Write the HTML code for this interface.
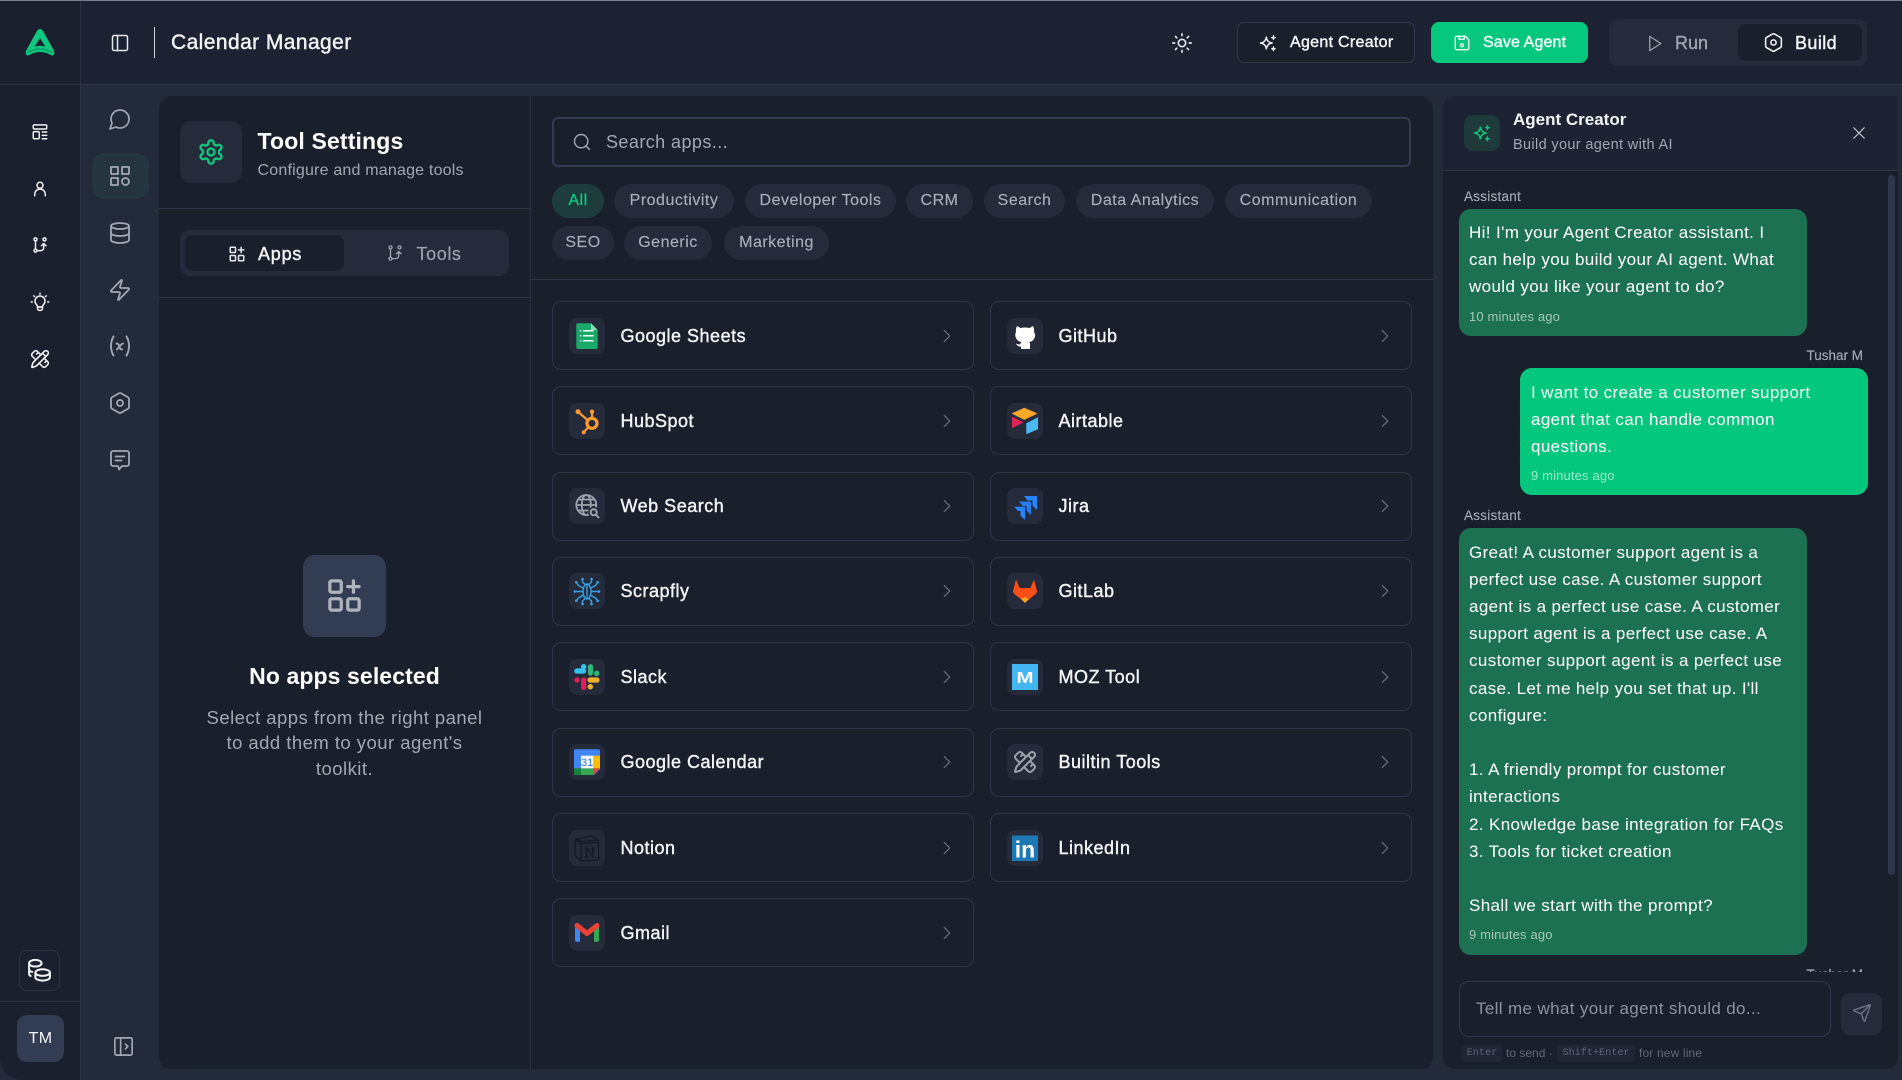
<!DOCTYPE html>
<html><head><meta charset="utf-8"><title>Calendar Manager</title>
<style>
*{box-sizing:border-box}
html,body{margin:0;padding:0;width:1902px;height:1080px;overflow:hidden;background:#232a3a;font-family:"Liberation Sans",sans-serif}
.abs,.t,.box,svg.i{position:absolute}
.t{white-space:nowrap;line-height:20px;height:20px}
.m{-webkit-text-stroke:.42px currentColor}
svg.i{fill:none;stroke:currentColor;stroke-linecap:round;stroke-linejoin:round;stroke-width:2}
.card{position:absolute;width:422px;height:69px;border:1.5px solid #2d3548;border-radius:9px;background:#1a1f2c}
.ib{position:absolute;left:15.5px;top:15.5px;width:36px;height:36px;border-radius:8px;background:#252b3a}
.ib svg{position:absolute;left:0;top:0;width:36px;height:36px}
.cn{position:absolute;left:67.5px;top:23.5px;line-height:20px;font-size:18px;letter-spacing:.5px;color:#f3f4f6;white-space:nowrap;-webkit-text-stroke:.4px #f3f4f6}
.chev{position:absolute;left:382.5px;top:22.5px;width:22px;height:22px;fill:none;stroke:#6b7280;stroke-width:1.3;stroke-linecap:round;stroke-linejoin:round}
.chip{position:absolute;height:34px;border-radius:17px;background:#252b3a;color:#a9afba;font-size:16px;letter-spacing:.5px;line-height:34px;text-align:center;white-space:nowrap;-webkit-text-stroke:.15px #a9afba}
.b{position:absolute;border-radius:12px;color:#fff;font-size:17px;letter-spacing:.37px;line-height:27.2px;white-space:nowrap}
.ts{font-size:13px;letter-spacing:.15px;line-height:20px}
.lbl{position:absolute;font-size:13.5px;letter-spacing:.25px;color:#a4aab5;line-height:20px;white-space:nowrap;-webkit-text-stroke:.15px #a4aab5}
kbd{position:absolute;height:17px;line-height:17px;background:#202635;border-radius:3px;color:#5f6776;font:10.2px/17px "Liberation Mono",monospace;text-align:center}
</style></head><body>

<div class="abs" style="left:0;top:0;width:1902px;height:1080px;background:#232a3a;border-radius:0 0 22px 22px;overflow:hidden">

<!-- header -->
<div class="abs" style="left:0;top:0;width:1902px;height:84px;background:#1c2231"></div>
<div class="abs" style="left:0;top:84px;width:1902px;height:1px;background:#2d3548"></div>
<!-- rail -->
<div class="abs" style="left:0;top:0;width:80px;height:1080px;background:#1a202d"></div>
<div class="abs" style="left:80px;top:0;width:1px;height:1080px;background:#2a3244"></div>
<div class="abs" style="left:0;top:84px;width:80px;height:1px;background:#2d3548"></div>

<!-- logo -->
<svg class="abs" style="left:0;top:0" width="80" height="84"><path d="M40 29Q42 29 43.2 31.2L53.8 50.5Q55.6 54.6 52 55.6Q40 48.5 28 55.6Q24.4 54.6 26.2 50.5L36.8 31.2Q38 29 40 29z" fill="#0cc97f"/><path d="M40 38L45.5 47Q40 44.6 34.5 47z" fill="#1a202d"/><path d="M27 53Q40 45 53 53" fill="none" stroke="#0a9d66" stroke-width="1.6"/></svg>

<!-- header left -->
<svg class="i" style="left:110px;top:33px;color:#e5e7eb;stroke-width:1.8" width="20" height="20" viewBox="0 0 24 24"><rect x="3" y="3" width="18" height="18" rx="2"/><path d="M9 3v18"/></svg>
<div class="abs" style="left:154px;top:27px;width:1px;height:31px;background:#d1d5db"></div>
<div class="t m" style="left:171px;top:33px;font-size:21px;letter-spacing:.42px;color:#f3f4f6">Calendar Manager</div>

<!-- header right -->
<svg class="i" style="left:1171px;top:32px;color:#e5e7eb;stroke-width:1.8" width="22" height="22" viewBox="0 0 24 24"><circle cx="12" cy="12" r="4"/><path d="M12 2v2M12 20v2M4.9 4.9l1.4 1.4M17.7 17.7l1.4 1.4M2 12h2M20 12h2M4.9 19.1l1.4-1.4M17.7 6.3l1.4-1.4"/></svg>

<div class="abs" style="left:1237px;top:22px;width:178px;height:41px;border:1.5px solid #2f374b;border-radius:7px;background:#1a1f2c"></div>
<svg class="i" style="left:1258px;top:33px;color:#f3f4f6;stroke-width:1.8" width="20" height="20" viewBox="0 0 24 24"><path d="M10 5Q10.8 11.2 17 12Q10.8 12.8 10 19Q9.2 12.8 3 12Q9.2 11.2 10 5z"/><path d="M18.5 2.5l.9 2.1 2.1.9-2.1.9-.9 2.1-.9-2.1-2.1-.9 2.1-.9z" fill="currentColor" stroke-width=".6"/><path d="M18.5 16l.9 2.1 2.1.9-2.1.9-.9 2.1-.9-2.1-2.1-.9 2.1-.9z" fill="currentColor" stroke-width=".6"/></svg>
<div class="t m" style="left:1290px;top:33px;font-size:16px;letter-spacing:.3px;color:#f3f4f6">Agent Creator</div>

<div class="abs" style="left:1431px;top:22px;width:157px;height:41px;border-radius:8px;background:#05c77d"></div>
<svg class="i" style="left:1453px;top:34px;color:#f5fffb;stroke-width:1.8" width="18" height="18" viewBox="0 0 24 24"><path d="M5 3h11.5L21 7.5V19a2 2 0 0 1-2 2H5a2 2 0 0 1-2-2V5a2 2 0 0 1 2-2z"/><path d="M8 3v4h7V3"/><circle cx="12" cy="15" r="2"/></svg>
<div class="t m" style="left:1483px;top:33px;font-size:16px;letter-spacing:.13px;color:#f5fffb">Save Agent</div>

<div class="abs" style="left:1609px;top:19px;width:258px;height:47px;border-radius:9px;background:#252b3a"></div>
<div class="abs" style="left:1738px;top:24px;width:124px;height:37px;border-radius:8px;background:#1a1f2c"></div>
<svg class="i" style="left:1645px;top:33.5px;color:#9ca3af;stroke-width:1.6" width="19" height="19" viewBox="0 0 24 24"><path d="M6 3l14 9-14 9z"/></svg>
<div class="t m" style="left:1675px;top:33px;font-size:18px;color:#9ca3af">Run</div>
<svg class="i" style="left:1763px;top:32px;color:#f3f4f6;stroke-width:1.8" width="21" height="21" viewBox="0 0 24 24"><path d="M21 16V8a2 2 0 0 0-1-1.73l-7-4a2 2 0 0 0-2 0l-7 4A2 2 0 0 0 3 8v8a2 2 0 0 0 1 1.73l7 4a2 2 0 0 0 2 0l7-4A2 2 0 0 0 21 16z"/><circle cx="12" cy="12" r="3"/></svg>
<div class="t m" style="left:1795px;top:33px;font-size:18px;letter-spacing:.4px;color:#f3f4f6">Build</div>

<!-- rail icons -->
<svg class="i" style="left:31px;top:123px;color:#f3f4f6;stroke-width:1.9" width="18" height="18" viewBox="0 0 24 24"><rect x="3" y="2.5" width="18" height="5.5" rx="1.5"/><rect x="3" y="11.5" width="8" height="9.5" rx="1.5"/><path d="M15 12h6M15 16.5h6M15 21h6"/></svg>
<svg class="i" style="left:31px;top:180px;color:#f3f4f6;stroke-width:1.9" width="18" height="18" viewBox="0 0 24 24"><circle cx="12" cy="7" r="4"/><path d="M5 21v-2a7 7 0 0 1 14 0v2"/></svg>
<svg class="i" style="left:31px;top:236px;color:#f3f4f6;stroke-width:1.9" width="18" height="18" viewBox="0 0 24 24"><circle cx="6" cy="4.5" r="2"/><circle cx="6" cy="19.5" r="2"/><circle cx="18" cy="4.5" r="2"/><path d="M6 6.5v11M8 19.5h5a4 4 0 0 0 4-4V10M14 13l3-3 3 3"/></svg>
<svg class="i" style="left:30px;top:292px;color:#f3f4f6;stroke-width:1.8" width="20" height="20" viewBox="0 0 24 24"><path d="M8.2 15.5a6 6 0 1 1 7.6 0c-.6.6-.8 1.3-.8 2.5H9c0-1.2-.2-1.9-.8-2.5z"/><path d="M9 18h6v1.5a2.5 2.5 0 0 1-2.5 2.5h-1A2.5 2.5 0 0 1 9 19.5z"/><path d="M12 1.5v1M4.5 4.5l.8.8M19.5 4.5l-.8.8M1.5 12h1.2M21.3 12h1.2"/></svg>
<svg class="i" style="left:30px;top:349px;color:#f3f4f6;stroke-width:1.9" width="20" height="20" viewBox="0 0 24 24"><path d="M13 7 8.7 2.7a2.41 2.41 0 0 0-3.4 0L2.7 5.3a2.41 2.41 0 0 0 0 3.4L7 13"/><path d="m8 6 2-2"/><path d="m18 16 2-2"/><path d="m17 11 4.3 4.3c.94.94.94 2.46 0 3.4l-2.6 2.6c-.94.94-2.46.94-3.4 0L11 17"/><path d="M21.174 6.812a1 1 0 0 0-3.986-3.987L3.842 16.174a2 2 0 0 0-.5.83l-1.321 4.352a.5.5 0 0 0 .623.622l4.353-1.32a2 2 0 0 0 .83-.497z"/><path d="m15 5 4 4"/></svg>

<!-- coin button -->
<div class="abs" style="left:19px;top:950px;width:41px;height:41px;border:1.2px solid #2a3244;border-radius:8px"></div>
<svg class="i" style="left:27px;top:958px;color:#f3f4f6;stroke-width:1.9" width="25" height="25" viewBox="0 0 24 24"><ellipse cx="8" cy="5" rx="6" ry="3.2"/><path d="M2 5v5.5c0 1.3 1.2 2.4 3 2.9M2 10.5V15c0 1 .5 1.7 1.5 2.3"/><ellipse cx="15" cy="14" rx="7" ry="3.2"/><path d="M8 14v4.5c0 1.8 3.1 3.2 7 3.2s7-1.4 7-3.2V14"/></svg>
<div class="abs" style="left:0;top:1001px;width:80px;height:1px;background:#2a3244"></div>
<div class="abs" style="left:17px;top:1015px;width:47px;height:47px;border-radius:10px;background:#323c52;color:#f3f4f6;font-size:16px;line-height:47px;text-align:center;letter-spacing:.3px">TM</div>

<!-- sidebar icons -->
<div class="abs" style="left:92px;top:153px;width:57px;height:46px;border-radius:12px;background:#243540"></div>
<svg class="i" style="left:108px;top:107px;color:#a1a8b3;stroke-width:1.7" width="24" height="24" viewBox="0 0 24 24"><path d="M7.9 20A9 9 0 1 0 4 16.1L2 22Z"/></svg>
<svg class="i" style="left:108px;top:163.5px;color:#a1a8b3;stroke-width:1.8" width="24" height="24" viewBox="0 0 24 24"><rect x="3" y="3" width="7" height="7"/><rect x="14" y="3" width="7" height="7"/><rect x="3" y="14" width="7" height="7"/><circle cx="17.5" cy="17.5" r="3.5"/></svg>
<svg class="i" style="left:108px;top:221px;color:#a1a8b3;stroke-width:1.8" width="24" height="24" viewBox="0 0 24 24"><ellipse cx="12" cy="5" rx="9" ry="3"/><path d="M3 5V19A9 3 0 0 0 21 19V5"/><path d="M3 12A9 3 0 0 0 21 12"/></svg>
<svg class="i" style="left:108px;top:278px;color:#a1a8b3;stroke-width:1.8" width="24" height="24" viewBox="0 0 24 24"><path d="M4 14a1 1 0 0 1-.78-1.63l9.9-10.2a.5.5 0 0 1 .86.46l-1.92 6.02A1 1 0 0 0 13 10h7a1 1 0 0 1 .78 1.63l-9.9 10.2a.5.5 0 0 1-.86-.46l1.92-6.02A1 1 0 0 0 11 14z"/></svg>
<svg class="i" style="left:108px;top:334px;color:#a1a8b3;stroke-width:1.9" width="24" height="24" viewBox="0 0 24 24"><path d="M5.5 2.5C2.2 8 2.2 16 5.5 21.5"/><path d="M18.5 2.5C21.8 8 21.8 16 18.5 21.5"/><path d="M8.5 9.5c1.6 0 2.2.8 2.8 2.7s1.1 3.3 2.8 3.3"/><path d="M15 9.5c-2 .4-3.6 3-6 6"/></svg>
<svg class="i" style="left:108px;top:391px;color:#a1a8b3;stroke-width:1.8" width="24" height="24" viewBox="0 0 24 24"><path d="M21 16V8a2 2 0 0 0-1-1.73l-7-4a2 2 0 0 0-2 0l-7 4A2 2 0 0 0 3 8v8a2 2 0 0 0 1 1.73l7 4a2 2 0 0 0 2 0l7-4A2 2 0 0 0 21 16z"/><circle cx="12" cy="12" r="3"/></svg>
<svg class="i" style="left:108px;top:448px;color:#a1a8b3;stroke-width:1.8" width="24" height="24" viewBox="0 0 24 24"><path d="M5 3h14a2 2 0 0 1 2 2v11a2 2 0 0 1-2 2h-5l-3 3.5-1-3.5H5a2 2 0 0 1-2-2V5a2 2 0 0 1 2-2z"/><path d="M7.5 8.5h9M7.5 12.5h6"/></svg>
<svg class="i" style="left:111.5px;top:1034.5px;color:#a1a8b3;stroke-width:1.7" width="23" height="23" viewBox="0 0 24 24"><rect x="3" y="3" width="18" height="18" rx="1.5"/><path d="M9 3v18M14 9.5l2.5 2.5-2.5 2.5"/></svg>

<!-- left panel -->
<div class="abs" style="left:159px;top:96px;width:371px;height:973px;background:#1a1f2c;border-radius:12px 0 0 12px"></div>
<div class="abs" style="left:530px;top:96px;width:1px;height:973px;background:#2a3244"></div>
<div class="abs" style="left:180px;top:121px;width:62px;height:62px;border-radius:11px;background:#252b3a"></div>
<svg class="i" style="left:197px;top:138px;color:#0cc97f;stroke-width:2" width="28" height="28" viewBox="0 0 24 24"><path d="M12.22 2h-.44a2 2 0 0 0-2 2v.18a2 2 0 0 1-1 1.73l-.43.25a2 2 0 0 1-2 0l-.15-.08a2 2 0 0 0-2.73.73l-.22.38a2 2 0 0 0 .73 2.73l.15.1a2 2 0 0 1 1 1.72v.51a2 2 0 0 1-1 1.74l-.15.09a2 2 0 0 0-.73 2.73l.22.38a2 2 0 0 0 2.73.73l.15-.08a2 2 0 0 1 2 0l.43.25a2 2 0 0 1 1 1.73V20a2 2 0 0 0 2 2h.44a2 2 0 0 0 2-2v-.18a2 2 0 0 1 1-1.73l.43-.25a2 2 0 0 1 2 0l.15.08a2 2 0 0 0 2.73-.73l.22-.39a2 2 0 0 0-.73-2.73l-.15-.08a2 2 0 0 1-1-1.74v-.5a2 2 0 0 1 1-1.74l.15-.09a2 2 0 0 0 .73-2.73l-.22-.38a2 2 0 0 0-2.73-.73l-.15.08a2 2 0 0 1-2 0l-.43-.25a2 2 0 0 1-1-1.73V4a2 2 0 0 0-2-2z"/><circle cx="12" cy="12" r="3"/></svg>
<div class="t" style="left:257.5px;top:131px;font-size:23px;font-weight:700;letter-spacing:.15px;color:#fff">Tool Settings</div>
<div class="t" style="left:257.5px;top:161px;font-size:16px;letter-spacing:.2px;color:#a1a8b3">Configure and manage tools</div>
<div class="abs" style="left:159px;top:208px;width:371px;height:1px;background:#2d3548"></div>
<div class="abs" style="left:180px;top:230px;width:329px;height:46px;border-radius:10px;background:#252b3a"></div>
<div class="abs" style="left:185px;top:235px;width:159px;height:36px;border-radius:8px;background:#1a1f2c"></div>
<svg class="i" style="left:228px;top:245px;color:#e5e7eb;stroke-width:2" width="18" height="18" viewBox="0 0 24 24"><rect x="3" y="3" width="7" height="7" rx="1"/><rect x="3" y="14" width="7" height="7" rx="1"/><rect x="14" y="14" width="7" height="7" rx="1"/><path d="M17.5 3v7M14 6.5h7"/></svg>
<div class="t m" style="left:258px;top:243.5px;font-size:18px;letter-spacing:.8px;color:#f3f4f6">Apps</div>
<svg class="i" style="left:386px;top:244px;color:#9ca3af;stroke-width:1.8" width="18" height="18" viewBox="0 0 24 24"><circle cx="6" cy="4.5" r="2"/><circle cx="6" cy="19.5" r="2"/><circle cx="18" cy="4.5" r="2"/><path d="M6 6.5v11M8 19.5h5a4 4 0 0 0 4-4V10M14 13l3-3 3 3"/></svg>
<div class="t" style="left:416.5px;top:243.5px;font-size:18px;letter-spacing:.6px;color:#9ca3af;-webkit-text-stroke:.2px #9ca3af">Tools</div>
<div class="abs" style="left:159px;top:297px;width:371px;height:1px;background:#2d3548"></div>

<div class="abs" style="left:303px;top:555px;width:83px;height:82px;border-radius:12px;background:#323c52"></div>
<svg class="i" style="left:325px;top:576px;color:#aeb3bc;stroke-width:2" width="39" height="39" viewBox="0 0 24 24"><rect x="3" y="3" width="7" height="7" rx="1"/><rect x="3" y="14" width="7" height="7" rx="1"/><rect x="14" y="14" width="7" height="7" rx="1"/><path d="M17.5 3v7M14 6.5h7"/></svg>
<div class="t" style="left:159px;width:371px;top:666px;text-align:center;font-size:23px;font-weight:700;letter-spacing:.1px;color:#fff">No apps selected</div>
<div class="abs" style="left:159px;width:371px;top:704.5px;text-align:center;font-size:18.5px;letter-spacing:.46px;line-height:25.8px;color:#a1a8b3;white-space:nowrap">Select apps from the right panel<br>to add them to your agent's<br>toolkit.</div>

<!-- center panel -->
<div class="abs" style="left:531px;top:96px;width:902px;height:973px;background:#1a1f2c;border-radius:0 12px 12px 0"></div>
<div class="abs" style="left:552px;top:117px;width:859px;height:50px;border:2px solid #323c52;border-radius:6px"></div>
<svg class="i" style="left:572px;top:132px;color:#a1a8b3;stroke-width:1.7" width="20" height="20" viewBox="0 0 24 24"><circle cx="11" cy="11" r="8"/><path d="m21 21-4.3-4.3"/></svg>
<div class="t" style="left:606px;top:132px;font-size:18px;letter-spacing:.43px;color:#a1a8b3">Search apps...</div>

<div class="chip" style="left:552px;top:184px;width:52px;background:#1d3d3d;color:#0cc97f;-webkit-text-stroke:.3px #0cc97f">All</div>
<div class="chip" style="left:614px;top:184px;width:120px">Productivity</div>
<div class="chip" style="left:745px;top:184px;width:151px">Developer Tools</div>
<div class="chip" style="left:906px;top:184px;width:67px">CRM</div>
<div class="chip" style="left:984px;top:184px;width:81px">Search</div>
<div class="chip" style="left:1076px;top:184px;width:138px">Data Analytics</div>
<div class="chip" style="left:1225px;top:184px;width:147px">Communication</div>
<div class="chip" style="left:552px;top:226px;width:62px">SEO</div>
<div class="chip" style="left:624px;top:226px;width:88px">Generic</div>
<div class="chip" style="left:724px;top:226px;width:105px">Marketing</div>
<div class="abs" style="left:531px;top:279px;width:902px;height:1px;background:#2d3548"></div>

<!-- cards column 1 -->
<div class="card" style="left:552px;top:301px"><div class="ib"><svg viewBox="0 0 36 36"><path d="M8.8 5.3H22L28.7 12V29.5a1.5 1.5 0 0 1-1.5 1.5H8.8a1.5 1.5 0 0 1-1.5-1.5V6.8a1.5 1.5 0 0 1 1.5-1.5z" fill="#19a968"/><path d="M22 5.3 28.7 12H22z" fill="#8adbb4"/><path d="M11 12.7h1.2M14 12.7h10.5M11 17.7h1.2M14 17.7h10.5M11 22.7h1.2M14 22.7h10.5" stroke="#fff" stroke-width="1.5"/></svg></div><div class="cn">Google Sheets</div><svg class="chev" viewBox="0 0 24 24"><path d="m9 18 6-6-6-6"/></svg></div>

<div class="card" style="left:552px;top:386px"><div class="ib"><svg viewBox="0 0 36 36"><g stroke="#ff9a2e" fill="none"><circle cx="23" cy="20.3" r="5" stroke-width="3.2"/><path d="M9 8.7 19 17.5M23 8.7V15M14.7 29.3 19.5 24" stroke-width="2.2"/></g><circle cx="9" cy="8.7" r="2.5" fill="#ff9a2e"/><circle cx="23" cy="8.7" r="2.2" fill="#ff9a2e"/><circle cx="14.7" cy="29.3" r="2.1" fill="#ff9a2e"/></svg></div><div class="cn">HubSpot</div><svg class="chev" viewBox="0 0 24 24"><path d="m9 18 6-6-6-6"/></svg></div>

<div class="card" style="left:552px;top:471.5px"><div class="ib"><svg viewBox="0 0 36 36"><g stroke="#9ca3ab" fill="none" stroke-width="1.8"><circle cx="17.3" cy="17" r="10"/><ellipse cx="17.3" cy="17" rx="4.5" ry="10"/><path d="M7.3 17h20M9 11.5h16.6M9 22.5h16.6"/></g><circle cx="24.7" cy="24.3" r="5.5" fill="#252b3a"/><circle cx="24.7" cy="24.3" r="3" fill="none" stroke="#9ca3ab" stroke-width="2"/><path d="M27 26.7 30 30" stroke="#9ca3ab" stroke-width="2"/></svg></div><div class="cn">Web Search</div><svg class="chev" viewBox="0 0 24 24"><path d="m9 18 6-6-6-6"/></svg></div>

<div class="card" style="left:552px;top:556.5px"><div class="ib"><svg viewBox="0 0 36 36"><g stroke="#38a4e8" fill="none" stroke-width="1.4"><ellipse cx="18" cy="18.5" rx="4" ry="7.5"/><path d="M16 11.5 13.5 9V6.5M20 11.5 22.5 9V6.5M14 15 9.5 12.5 7.5 9.5M22 15 26.5 12.5 28.5 9.5M14 18.5H6.5M22 18.5H29.5M14.5 22 9.5 25 7.5 27.5M21.5 22 26.5 25 28.5 27.5M16 25.5 13.5 28V31M20 25.5 22.5 28V31M18 11V26"/></g><g fill="#38a4e8"><circle cx="13.5" cy="6" r="1.3"/><circle cx="22.5" cy="6" r="1.3"/><circle cx="7.3" cy="9.3" r="1.3"/><circle cx="28.7" cy="9.3" r="1.3"/><circle cx="6" cy="18.5" r="1.3"/><circle cx="30" cy="18.5" r="1.3"/><circle cx="7.3" cy="27.7" r="1.3"/><circle cx="28.7" cy="27.7" r="1.3"/><circle cx="13.5" cy="31" r="1.3"/><circle cx="22.5" cy="31" r="1.3"/></g></svg></div><div class="cn">Scrapfly</div><svg class="chev" viewBox="0 0 24 24"><path d="m9 18 6-6-6-6"/></svg></div>

<div class="card" style="left:552px;top:642px"><div class="ib"><svg viewBox="0 0 36 36"><g fill="none" stroke-width="5.2" stroke-linecap="round"><path d="M21.5 7.7V14" stroke="#2eb67d"/><path d="M7.8 12H14.5" stroke="#36c5f0"/><path d="M14.7 21V28.5" stroke="#e01e5a"/><path d="M21 21H28" stroke="#ecb22e"/></g><circle cx="27.7" cy="14.3" r="2.7" fill="#2eb67d"/><circle cx="14.7" cy="7.7" r="2.7" fill="#36c5f0"/><circle cx="8" cy="21" r="2.7" fill="#e01e5a"/><circle cx="21.3" cy="27.7" r="2.7" fill="#ecb22e"/></svg></div><div class="cn">Slack</div><svg class="chev" viewBox="0 0 24 24"><path d="m9 18 6-6-6-6"/></svg></div>

<div class="card" style="left:552px;top:727.5px"><div class="ib"><svg viewBox="0 0 36 36"><path d="M6.5 5.3H29.5a1.5 1.5 0 0 1 1.5 1.5V25L25 31H6.5A1.5 1.5 0 0 1 5 29.5V6.8a1.5 1.5 0 0 1 1.5-1.5z" fill="#3f85f4"/><rect x="24.3" y="11.7" width="6.7" height="13.3" fill="#fbbc04"/><rect x="12" y="24.3" width="13" height="6.7" fill="#34a853"/><rect x="5" y="24.3" width="7" height="6.7" fill="#188038"/><path d="M24.3 31 31 24.3H24.3z" fill="#ea4335"/><rect x="12" y="11.7" width="12.3" height="12.6" fill="#fff"/><text x="18.1" y="22" text-anchor="middle" font-family="Liberation Sans" font-size="11" fill="#1a73e8">31</text></svg></div><div class="cn">Google Calendar</div><svg class="chev" viewBox="0 0 24 24"><path d="m9 18 6-6-6-6"/></svg></div>

<div class="card" style="left:552px;top:813px"><div class="ib"><svg viewBox="0 0 36 36"><g fill="none" stroke="#12161f" stroke-width="1.1"><path d="M6 9.5 22.5 6 29.5 11V30L12 31 6 25z"/><path d="M6 9.5 12 13.5 29.5 12.5M12 13.5V31M8 9 12 11.5 27 10.5"/></g><text x="20.5" y="27" text-anchor="middle" font-family="Liberation Serif" font-size="14" fill="none" stroke="#12161f" stroke-width=".7">N</text></svg></div><div class="cn">Notion</div><svg class="chev" viewBox="0 0 24 24"><path d="m9 18 6-6-6-6"/></svg></div>

<div class="card" style="left:552px;top:898px"><div class="ib"><svg viewBox="0 0 36 36"><path d="M6 12.5 11 10V26.7H7.5A1.5 1.5 0 0 1 6 25.2z" fill="#4285f4"/><path d="M30 12.5 25 10V26.7H28.5A1.5 1.5 0 0 0 30 25.2z" fill="#34a853"/><path d="M8 10.5 18 18.5 28 10.5" fill="none" stroke="#ea4335" stroke-width="5" stroke-linecap="round" stroke-linejoin="round"/></svg></div><div class="cn">Gmail</div><svg class="chev" viewBox="0 0 24 24"><path d="m9 18 6-6-6-6"/></svg></div>

<!-- cards column 2 -->
<div class="card" style="left:990px;top:301px"><div class="ib"><svg viewBox="0 0 36 36"><path d="M10 8l3.5 2Q18 9 22.5 10L26 8Q27.5 11 27 14Q29 17 27.5 20Q26 23.5 22 24Q23.5 25.5 23 27V31H14V28.5Q10.5 29 9 25.5Q11 26.5 13 26.5Q13.5 25 14.5 24Q10.5 23.5 9 20Q7.5 17 9 14Q8.5 11 10 8z" fill="#fff"/></svg></div><div class="cn">GitHub</div><svg class="chev" viewBox="0 0 24 24"><path d="m9 18 6-6-6-6"/></svg></div>

<div class="card" style="left:990px;top:386px"><div class="ib"><svg viewBox="0 0 36 36"><path d="M17.3 5.3 29.3 10.5 17.3 16.3 5.7 10.5z" fill="#fba729" stroke="#fba729" stroke-linejoin="round"/><path d="M5 13.7 16.7 19.3 5 25.3z" fill="#e02454"/><path d="M19.3 20.3 31 14.3V26.3L19.3 31.3z" fill="#4ab9f3"/></svg></div><div class="cn">Airtable</div><svg class="chev" viewBox="0 0 24 24"><path d="m9 18 6-6-6-6"/></svg></div>

<div class="card" style="left:990px;top:471.5px"><div class="ib"><svg viewBox="0 0 36 36"><g fill="#2684ff"><path d="M17 8H30V22L25.5 17.5V12.5H20.5z"/><path d="M12 13.5H24V27L19.5 22.5V18H15.5z" opacity=".92"/><path d="M7 18.7H18V32L13.5 27.5V23H11z"/></g></svg></div><div class="cn">Jira</div><svg class="chev" viewBox="0 0 24 24"><path d="m9 18 6-6-6-6"/></svg></div>

<div class="card" style="left:990px;top:556.5px"><div class="ib"><svg viewBox="0 0 36 36"><path d="M9 6.5 12.7 15H23.3L27 6.5 30 18Q30 20 28 21.5L18 29.5 8 21.5Q6 20 6 18z" fill="#fc4f17"/><path d="M18 24 22 26 18 30 14 26z" fill="#fca326"/></svg></div><div class="cn">GitLab</div><svg class="chev" viewBox="0 0 24 24"><path d="m9 18 6-6-6-6"/></svg></div>

<div class="card" style="left:990px;top:642px"><div class="ib"><svg viewBox="0 0 36 36"><rect x="5" y="5" width="26" height="26" fill="#43b5f0"/><text x="18" y="24" text-anchor="middle" font-family="Liberation Sans" font-size="16" font-weight="700" fill="#fff" textLength="17" lengthAdjust="spacingAndGlyphs">M</text></svg></div><div class="cn">MOZ Tool</div><svg class="chev" viewBox="0 0 24 24"><path d="m9 18 6-6-6-6"/></svg></div>

<div class="card" style="left:990px;top:727.5px"><div class="ib"><svg viewBox="-6 -6 36 36" fill="none" stroke="#9ca3ab" stroke-width="2" stroke-linecap="round" stroke-linejoin="round"><path d="M13 7 8.7 2.7a2.41 2.41 0 0 0-3.4 0L2.7 5.3a2.41 2.41 0 0 0 0 3.4L7 13"/><path d="m8 6 2-2"/><path d="m18 16 2-2"/><path d="m17 11 4.3 4.3c.94.94.94 2.46 0 3.4l-2.6 2.6c-.94.94-2.46.94-3.4 0L11 17"/><path d="M21.174 6.812a1 1 0 0 0-3.986-3.987L3.842 16.174a2 2 0 0 0-.5.83l-1.321 4.352a.5.5 0 0 0 .623.622l4.353-1.32a2 2 0 0 0 .83-.497z"/><path d="m15 5 4 4"/></svg></div><div class="cn">Builtin Tools</div><svg class="chev" viewBox="0 0 24 24"><path d="m9 18 6-6-6-6"/></svg></div>

<div class="card" style="left:990px;top:813px"><div class="ib"><svg viewBox="0 0 36 36"><rect x="5" y="5.5" width="26" height="25.5" fill="#1f78b4"/><text x="18" y="27.5" text-anchor="middle" font-family="Liberation Sans" font-size="23" font-weight="700" fill="#fff">in</text></svg></div><div class="cn">LinkedIn</div><svg class="chev" viewBox="0 0 24 24"><path d="m9 18 6-6-6-6"/></svg></div>

<!-- right panel -->
<div class="abs" style="left:1443px;top:96px;width:455px;height:973px;background:#1a1f2c;border-radius:12px 0 12px 12px"></div>
<div class="abs" style="left:1443px;top:96px;width:455px;height:75px;background:#1d2332;border-radius:12px 0 0 0"></div>
<div class="abs" style="left:1443px;top:170px;width:455px;height:1px;background:#2d3548"></div>
<div class="abs" style="left:1464px;top:115px;width:36px;height:36px;border-radius:9px;background:#1e3a3a"></div>
<svg class="i" style="left:1472px;top:123px;color:#0cc97f;stroke-width:1.8" width="20" height="20" viewBox="0 0 24 24"><path d="M10 5Q10.8 11.2 17 12Q10.8 12.8 10 19Q9.2 12.8 3 12Q9.2 11.2 10 5z"/><path d="M18.5 2.5l.9 2.1 2.1.9-2.1.9-.9 2.1-.9-2.1-2.1-.9 2.1-.9z" fill="currentColor" stroke-width=".6"/><path d="M18.5 16l.9 2.1 2.1.9-2.1.9-.9 2.1-.9-2.1-2.1-.9 2.1-.9z" fill="currentColor" stroke-width=".6"/></svg>
<div class="t" style="left:1513px;top:110px;font-size:17px;font-weight:700;color:#f3f4f6">Agent Creator</div>
<div class="t" style="left:1513px;top:134.5px;font-size:14.5px;letter-spacing:.35px;color:#a1a8b3">Build your agent with AI</div>
<svg class="i" style="left:1850px;top:124px;color:#c4c8cf;stroke-width:1.6" width="18" height="18" viewBox="0 0 24 24"><path d="M19 5 5 19M5 5l14 14"/></svg>

<!-- scrollbar -->
<div class="abs" style="left:1888px;top:175px;width:7px;height:700px;border-radius:4px;background:#2e374d"></div>

<!-- messages -->
<div class="abs" style="left:1443px;top:172px;width:440px;height:800px;overflow:hidden">
  <div class="lbl" style="left:21px;top:15px">Assistant</div>
  <div class="b" style="left:16px;top:37px;width:348px;height:127px;background:#1c7152;padding:10px 10px">Hi! I'm your Agent Creator assistant. I<br>can help you build your AI agent. What<br>would you like your agent to do?<div class="ts" style="margin-top:6px;color:rgba(255,255,255,.6)">10 minutes ago</div></div>
  <div class="lbl" style="right:20px;top:174px;letter-spacing:0">Tushar M</div>
  <div class="b" style="left:77px;top:196px;width:348px;height:127px;background:#03c77c;padding:11px 11px">I want to create a customer support<br>agent that can handle common<br>questions.<div class="ts" style="margin-top:5px;color:rgba(255,255,255,.6)">9 minutes ago</div></div>
  <div class="lbl" style="left:21px;top:334px">Assistant</div>
  <div class="b" style="left:16px;top:356px;width:348px;height:427px;background:#1c7152;padding:10.6px 10px">Great! A customer support agent is a<br>perfect use case. A customer support<br>agent is a perfect use case. A customer<br>support agent is a perfect use case. A<br>customer support agent is a perfect use<br>case. Let me help you set that up. I'll<br>configure:<br><br>1. A friendly prompt for customer<br>interactions<br>2. Knowledge base integration for FAQs<br>3. Tools for ticket creation<br><br>Shall we start with the prompt?<div class="ts" style="margin-top:6px;color:rgba(255,255,255,.6)">9 minutes ago</div></div>
  <div class="lbl" style="right:20px;top:793px;letter-spacing:0">Tushar M</div>
</div>

<!-- input -->
<div class="abs" style="left:1459px;top:981px;width:372px;height:56px;border:1.5px solid #2f374b;border-radius:10px"></div>
<div class="t" style="left:1476px;top:999px;font-size:17px;letter-spacing:.36px;color:#8b93a3">Tell me what your agent should do...</div>
<div class="abs" style="left:1841px;top:993px;width:41px;height:42px;border-radius:9px;background:#252b3a"></div>
<svg class="i" style="left:1852px;top:1003px;color:#6b7280;stroke-width:1.7" width="20" height="20" viewBox="0 0 24 24"><path d="M14.536 21.686a.5.5 0 0 0 .937-.024l6.5-19a.496.496 0 0 0-.635-.635l-19 6.5a.5.5 0 0 0-.024.937l7.93 3.18a2 2 0 0 1 1.112 1.11z"/><path d="m21.854 2.147-10.94 10.939"/></svg>
<kbd style="left:1462px;top:1045px;width:40px">Enter</kbd>
<div class="t" style="left:1506px;top:1043px;font-size:12px;color:#606877">to send ·</div>
<kbd style="left:1557px;top:1045px;width:78px">Shift+Enter</kbd>
<div class="t" style="left:1639px;top:1043px;font-size:12px;letter-spacing:.15px;color:#606877">for new line</div>

</div>

<!-- top hairline -->
<div class="abs" style="left:0;top:0;width:1902px;height:1px;background:#7b808a"></div>
</body></html>
